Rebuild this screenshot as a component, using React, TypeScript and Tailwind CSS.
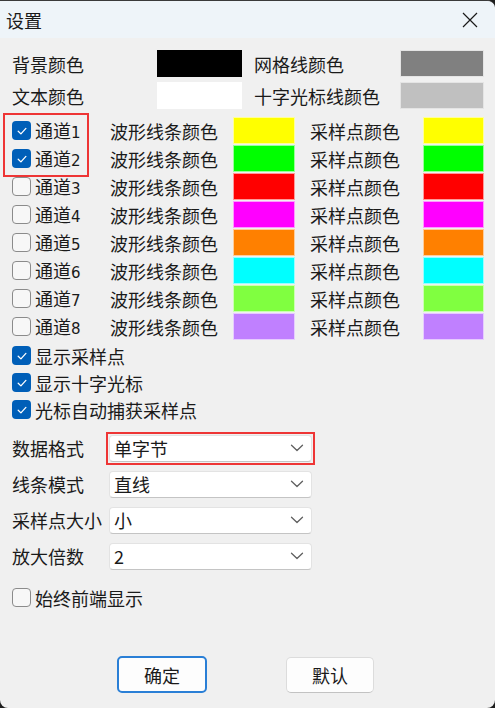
import React from "react";

const font = { fontFamily: '"Noto Sans CJK SC", "Noto Sans", sans-serif' };

function Check({ checked }: { checked: boolean }) {
  if (checked) {
    return (
      <span className="flex h-[19px] w-[19px] shrink-0 items-center justify-center rounded-[4px] bg-[#005fb8]">
        <svg width="12" height="12" viewBox="0 0 12 12" fill="none">
          <path d="M2.2 6.3 L4.9 8.9 L9.9 3.4" stroke="#ffffff" strokeWidth="1.3" strokeLinecap="round" strokeLinejoin="round" />
        </svg>
      </span>
    );
  }
  return <span className="block h-[19px] w-[19px] shrink-0 rounded-[4px] border border-[#8b8b8b] bg-[#f7f7f7]" />;
}

function Chevron() {
  return (
    <svg width="14" height="8" viewBox="0 0 14 8" fill="none" className="mr-[6px]">
      <path d="M1.5 1.2 L7 6.5 L12.5 1.2" stroke="#606060" strokeWidth="1.3" strokeLinecap="round" strokeLinejoin="round" />
    </svg>
  );
}

function Select({ value }: { value: string }) {
  return (
    <div className="flex h-[27px] w-[203px] items-center justify-between rounded-[4px] border border-[#e3e3e3] border-b-[#c4c4c4] bg-white pl-[4px] pr-[1px] text-[18px] leading-none text-[#1a1a1a]">
      <span>{value}</span>
      <Chevron />
    </div>
  );
}

const channels = [
  { n: 1, wave: "#ffff00", pt: "#ffff00", on: true },
  { n: 2, wave: "#00ff00", pt: "#00ff00", on: true },
  { n: 3, wave: "#ff0000", pt: "#ff0000", on: false },
  { n: 4, wave: "#ff00ff", pt: "#ff00ff", on: false },
  { n: 5, wave: "#ff8000", pt: "#ff8000", on: false },
  { n: 6, wave: "#00ffff", pt: "#00ffff", on: false },
  { n: 7, wave: "#80ff40", pt: "#80ff40", on: false },
  { n: 8, wave: "#c080ff", pt: "#c080ff", on: false },
];

export default function App() {
  return (
    <div className="h-[708px] w-[495px] overflow-hidden bg-[#1e1e1e]" style={font}>
      <div className="relative flex h-[708px] w-[495px] flex-col overflow-hidden rounded-tr-[8px] rounded-bl-[8px] rounded-br-[8px] border-t border-[#3a3a3a] bg-[#f0f0f0] text-[18px] leading-none text-[#1a1a1a]">
        {/* title bar */}
        <div className="flex h-[37px] shrink-0 items-center justify-between bg-[#eef4f9] pl-[6px] pr-[17px]">
          <span className="text-[18px]">设置</span>
          <svg width="16" height="16" viewBox="0 0 16 16" fill="none">
            <path d="M1 1 L15 15 M15 1 L1 15" stroke="#1a1a1a" strokeWidth="1.2" />
          </svg>
        </div>

        <div className="flex flex-col pl-[12px] pt-[12px]">
          {/* top color rows */}
          <div className="flex h-[27px] items-center">
            <span className="w-[145px]">背景颜色</span>
            <span className="h-[27px] w-[85px] bg-black" />
            <span className="ml-[12px] w-[146px]">网格线颜色</span>
            <span className="h-[27px] w-[84px] border border-[#e4e4e4] bg-[#808080]" />
          </div>
          <div className="mt-[5px] flex h-[27px] items-center">
            <span className="w-[145px]">文本颜色</span>
            <span className="h-[27px] w-[85px] bg-white" />
            <span className="ml-[12px] w-[146px]">十字光标线颜色</span>
            <span className="h-[27px] w-[84px] border border-[#e4e4e4] bg-[#c0c0c0]" />
          </div>

          {/* channels */}
          <div className="mt-[8px] flex flex-col gap-[1px]">
            {channels.map((c) => (
              <div key={c.n} className="flex h-[27px] items-center">
                <div className="flex w-[98px] items-center gap-[4px]">
                  <Check checked={c.on} />
                  <span>
                    通道<span style={{ fontFamily: '"DejaVu Sans", sans-serif' }} className="text-[15px]">{c.n}</span>
                  </span>
                </div>
                <span className="w-[123px]">波形线条颜色</span>
                <span className="h-[27px] w-[62px] border border-white/60" style={{ backgroundColor: c.wave }} />
                <span className="ml-[15px] w-[113px]">采样点颜色</span>
                <span className="h-[27px] w-[61px] border border-white/60" style={{ backgroundColor: c.pt }} />
              </div>
            ))}
          </div>

          {/* option checkboxes */}
          <div className="mt-[2px] flex flex-col">
            {["显示采样点", "显示十字光标", "光标自动捕获采样点"].map((t) => (
              <div key={t} className="flex h-[27px] items-center gap-[4px]">
                <Check checked />
                <span>{t}</span>
              </div>
            ))}
          </div>

          {/* selects */}
          <div className="mt-[7px] flex flex-col">
            <div className="flex h-[36px] items-center">
              <span className="w-[94px]">数据格式</span>
              <div className="border-2 border-[#ee3535] p-[1px]">
                <Select value="单字节" />
              </div>
            </div>
            {[
              { l: "线条模式", v: "直线" },
              { l: "采样点大小", v: "小" },
              { l: "放大倍数", v: "2" },
            ].map((r) => (
              <div key={r.l} className="flex h-[36px] items-center">
                <span className="w-[97px]">{r.l}</span>
                <Select value={r.v} />
              </div>
            ))}
          </div>

          <div className="mt-[10px] flex h-[27px] items-center gap-[4px]">
            <Check checked={false} />
            <span>始终前端显示</span>
          </div>
        </div>

        {/* buttons */}
        <div className="mt-[45px] flex items-center pl-[117px]">
          <button className="flex h-[37px] w-[90px] items-center justify-center rounded-[5px] border-2 border-[#2a7fd6] bg-[#fdfdfd] text-[18px]">
            确定
          </button>
          <button className="ml-[79px] flex h-[36px] w-[88px] items-center justify-center rounded-[5px] border border-[#dcdcdc] border-b-[#c2c2c2] bg-[#fdfdfd] text-[18px]">
            默认
          </button>
        </div>

        {/* annotation box around channels 1-2 */}
        <div className="pointer-events-none absolute left-[3px] top-[112px] h-[64px] w-[86px] border-2 border-[#ee3535]" />
      </div>
    </div>
  );
}
